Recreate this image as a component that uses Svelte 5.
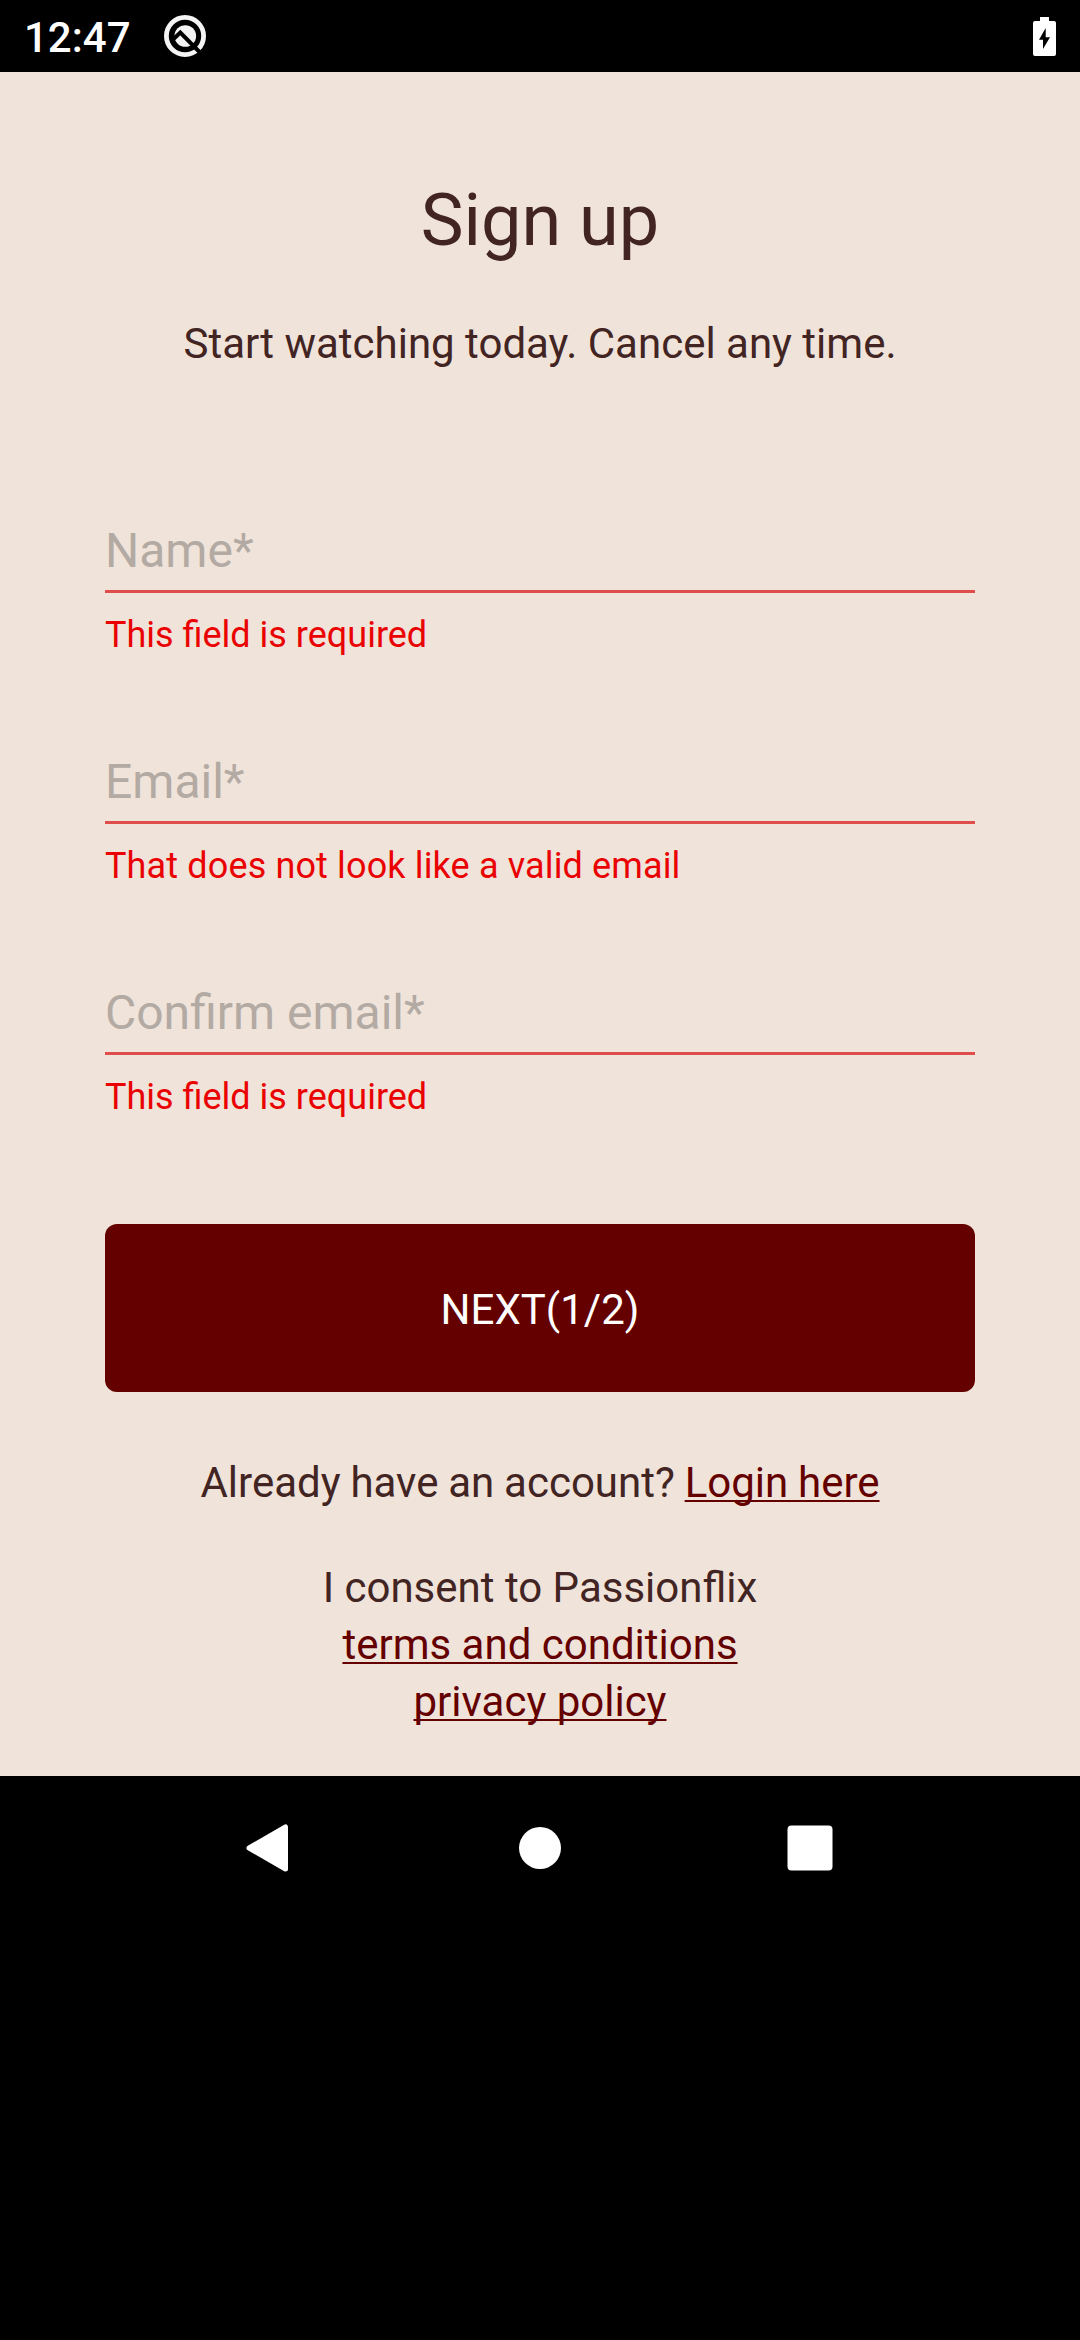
<script>
  const fields = [
    { label: 'Name*', error: 'This field is required' },
    { label: 'Email*', error: 'That does not look like a valid email', spaced: true },
    { label: 'Confirm email*', error: 'This field is required' },
  ];
</script>

<div class="screen">
  <header class="status">
    <span class="time">12:47</span>
    <svg class="q" width="44" height="44" viewBox="0 0 44 44">
      <circle cx="22" cy="22" r="18.6" fill="none" stroke="#f4f4f4" stroke-width="4.8" />
      <circle cx="22.3" cy="22" r="10.8" fill="#f4f4f4" />
      <path d="M9.5 26L17.3 18.6L37 38.5" fill="none" stroke="#000" stroke-width="4" />
    </svg>
    <svg class="battery" width="23" height="39" viewBox="0 0 23 39">
      <path d="M7 0h9v4h5q2 0 2 2v31q0 2-2 2H2q-2 0-2-2V6q0-2 2-2h5z" fill="#fff" />
      <path d="M12.7 11v9.2H17L10 32v-9.3H6z" fill="#000" />
    </svg>
  </header>

  <main>
    <h1>Sign up</h1>
    <p class="subtitle">Start watching today. Cancel any time.</p>
    <form>
      {#each fields as field}
        <div class="field">
          <div class="input">{field.label}</div>
          <div class="error" class:spaced={field.spaced}>{field.error}</div>
        </div>
      {/each}
      <button type="button">NEXT(1/2)</button>
    </form>
    <p class="login">Already have an account? <span class="link">Login here</span></p>
    <p class="consent">
      I consent to Passionflix<br />
      <span class="link">terms and conditions</span><br />
      <span class="link">privacy policy</span>
    </p>
  </main>

  <nav>
    <svg width="48" height="48" viewBox="0 0 48 48">
      <path d="M39.5 2.9V45.1L3 24z" fill="#fff" stroke="#fff" stroke-width="5" stroke-linejoin="round" />
    </svg>
    <svg width="48" height="48" viewBox="0 0 48 48"><circle cx="24" cy="24" r="21" fill="#fff" /></svg>
    <svg width="48" height="48" viewBox="0 0 48 48"><rect x="1.5" y="1.5" width="45" height="45" rx="4" fill="#fff" /></svg>
  </nav>
</div>

<style>
  :global(body) {
    margin: 0;
    background: #000;
  }
  .screen {
    width: 1080px;
    height: 2340px;
    background: #000;
    font-family: Roboto, sans-serif;
    color: #422422;
  }
  .status {
    height: 72px;
    box-sizing: border-box;
    padding: 0 24px;
    display: flex;
    align-items: center;
    color: #fff;
  }
  .time {
    font-size: 42px;
    line-height: 50px;
    font-weight: 500;
    padding-top: 3px;
  }
  .q {
    margin-left: 32px;
  }
  .battery {
    margin-left: auto;
  }
  main {
    height: 1704px;
    box-sizing: border-box;
    padding: 107px 105px 0;
    background: #efe3da;
    text-align: center;
  }
  h1 {
    margin: 0;
    font-size: 72px;
    line-height: 84px;
    font-weight: 400;
  }
  p {
    margin: 0;
    font-size: 42px;
    line-height: 57px;
  }
  .subtitle {
    margin: 56px 0 154px;
    line-height: 50px;
  }
  .field {
    margin-bottom: 98px;
    text-align: left;
  }
  .input {
    padding-bottom: 11px;
    border-bottom: 3px solid #e04e4b;
    font-size: 48px;
    line-height: 56px;
    color: #b3aaa3;
  }
  .error {
    margin-top: 21px;
    font-size: 36px;
    line-height: 42px;
    color: #ea0202;
  }
  .spaced {
    letter-spacing: 0.14px;
  }
  button {
    display: block;
    width: 870px;
    height: 168px;
    margin: 106px 0 0;
    padding: 4px 0 0;
    border: 0;
    border-radius: 12px;
    background: #650000;
    color: #fff;
    font: 400 42px/50px Roboto, sans-serif;
  }
  .login {
    margin-top: 62px;
    word-spacing: -0.6px;
  }
  .consent {
    margin-top: 48px;
  }
  .link {
    color: #650000;
    text-decoration: underline;
    text-decoration-thickness: 2px;
    text-underline-offset: 3px;
    text-decoration-skip-ink: none;
  }
  nav {
    display: grid;
    grid-template-columns: repeat(3, 270px);
    justify-content: center;
    justify-items: center;
    padding-top: 48px;
  }
</style>
